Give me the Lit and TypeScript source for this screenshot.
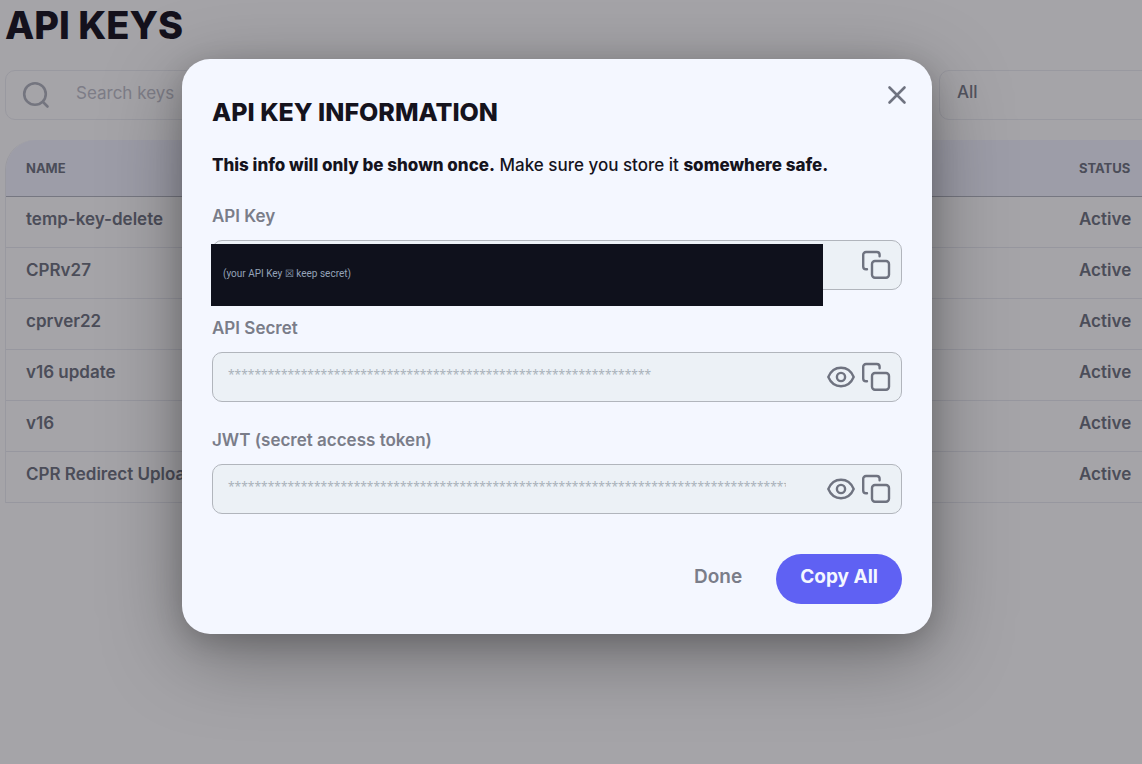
import { LitElement, html, css, svg } from "lit";
import { customElement, property, state } from "lit/decorators.js";

const copyIcon = svg`<svg class="icon" viewBox="0 0 30 30" width="30" height="30" aria-hidden="true">
  <rect x="11" y="11" width="17" height="16.8" rx="3"></rect>
  <path d="M6 19.2H5a2.8 2.8 0 0 1-2.8-2.8V4.8A2.8 2.8 0 0 1 5 2H15.8a2.8 2.8 0 0 1 2.8 2.8V6.2"></path>
</svg>`;

const eyeIcon = svg`<svg class="icon" viewBox="0 0 30 30" width="30" height="30" aria-hidden="true">
  <path d="M2.3 15C4.6 9.6 9.3 5.8 15 5.8S25.4 9.6 27.7 15C25.4 20.4 20.7 24.2 15 24.2S4.6 20.4 2.3 15Z"></path>
  <circle cx="15" cy="15" r="4.1"></circle>
</svg>`;

@customElement("secret-field")
export class SecretField extends LitElement {
  @property() label = "";
  @property() value = "";
  @property() cover = "";
  @property({ type: Boolean }) reveal = false;

  static styles = css`
    :host { display: block; }
    .label { display: block; font-size: 17px; line-height: 24px; font-weight: 600; color: #7a7d89; margin-bottom: 12px; }
    .wrap { position: relative; }
    .box {
      display: flex; align-items: center; gap: 5px; height: 50px; box-sizing: border-box;
      padding: 0 10px 0 15px; border: 1px solid #b1b5bc; border-radius: 10px; background: #ecf1f6;
    }
    .value {
      flex: 1; min-width: 0; margin-right: 35px; padding: 0 0 4px; border: 0; outline: 0; background: none;
      font: 400 12px/20px "Noto Sans", sans-serif; color: #a9b1ba;
    }
    .action { display: flex; padding: 0; border: 0; background: none; cursor: pointer; color: #6f7380; }
    .icon { fill: none; stroke: currentColor; stroke-width: 2.4; stroke-linecap: round; stroke-linejoin: round; }
    .cover {
      position: absolute; left: -1px; top: 4px; right: 79px; height: 62px; box-sizing: border-box;
      display: flex; align-items: center; padding: 0 12px 2px; background: #0f111c; color: #94a3b8;
      font: 400 10px/14px Roboto, sans-serif;
    }
  `;

  render() {
    return html`
      <label class="label" for="field">${this.label}</label>
      <div class="wrap">
        <div class="box">
          <input class="value" id="field" type="text" readonly .value=${this.value} />
          ${this.reveal ? html`<button class="action" type="button" aria-label="Show">${eyeIcon}</button>` : ""}
          <button class="action" type="button" aria-label="Copy">${copyIcon}</button>
        </div>
        ${this.cover ? html`<div class="cover">${this.cover}</div>` : ""}
      </div>
    `;
  }
}

@customElement("app-root")
export class AppRoot extends LitElement {
  @state() private keys = ["temp-key-delete", "CPRv27", "cprver22", "v16 update", "v16", "CPR Redirect Upload"];

  static styles = css`
    :host {
      display: block; position: relative; min-height: 100vh; overflow: hidden; background: #ffffff;
      font-family: Inter, sans-serif; color: #15131d;
    }
    .page { padding-left: 5px; margin-right: -20px; }
    .title { margin: 0 0 20px; font-size: 38px; line-height: 50px; font-weight: 800; }
    .filters { display: grid; grid-template-columns: 1fr 223px; gap: 20px; margin-bottom: 20px; }
    .search, .filter {
      height: 50px; box-sizing: border-box; border: 1px solid #ecedf2; border-radius: 10px;
      background: transparent; font: 400 17px/24px Inter, sans-serif;
    }
    .search { display: flex; align-items: center; gap: 26px; padding: 0 16px; }
    .search-icon { flex: none; fill: none; stroke: #b0b3bd; stroke-width: 2.6; stroke-linecap: round; }
    .query { flex: 1; min-width: 0; padding: 0 0 4px; border: 0; outline: 0; background: none; font: inherit; color: #6f7380; }
    .query::placeholder { color: #bfc1ca; opacity: 1; }
    .filter { appearance: none; padding: 0 17px 7px; color: #7a7d89; font-weight: 500; }
    .keys {
      width: 100%; border-collapse: separate; border-spacing: 0; text-align: left; color: #6f7380;
      border-left: 1px solid #ecedf2; border-radius: 30px 0 0 0;
    }
    .head { height: 57px; box-sizing: border-box; padding: 0 20px; background: #f2f4ff; border-bottom: 1px solid #b4b6c0; font-size: 13px; line-height: 18px; font-weight: 700; }
    .head:first-child { border-top-left-radius: 30px; }
    .cell { height: 51px; box-sizing: border-box; padding: 0 20px 6px; border-bottom: 1px solid #e9ebf0; font-size: 17px; line-height: 24px; font-weight: 600; }
    .status { width: 103px; box-sizing: border-box; }
    .overlay {
      position: absolute; inset: 0; display: flex; justify-content: center; align-items: flex-start;
      box-sizing: border-box; padding: 59px 28px 0 0; background: rgba(19, 17, 26, 0.38);
    }
    .modal {
      position: relative; box-sizing: border-box; width: 750px; max-width: 100%; padding: 37px 30px 30px;
      border-radius: 28px; background: #f4f7ff;
      box-shadow: 0 20px 80px rgba(0, 0, 0, 0.34), 0 8px 28px rgba(0, 0, 0, 0.16);
    }
    .close { position: absolute; top: 21px; right: 20px; display: flex; padding: 0; border: 0; background: none; cursor: pointer; }
    .close-icon { fill: none; stroke: #6f7380; stroke-width: 2.6; stroke-linecap: round; }
    .heading { margin: 0 0 23px; font-size: 25px; line-height: 32px; font-weight: 800; }
    .note { margin: 0 0 25px; font-size: 17px; line-height: 28px; font-weight: 500; }
    .strong { font-weight: 800; }
    .fields { display: grid; gap: 26px; }
    .actions { display: flex; justify-content: flex-end; gap: 10px; margin-top: 40px; }
    .done, .copy { height: 50px; border: 0; border-radius: 25px; padding: 0 24px 5px; font: 600 19px/26px Inter, sans-serif; cursor: pointer; }
    .done { background: none; color: #7a7d89; }
    .copy { background: #5f61f3; color: #f4f7ff; font-weight: 700; }
  `;

  render() {
    return html`
      <main class="page">
        <h1 class="title">API KEYS</h1>
        <div class="filters">
          <div class="search">
            <svg class="search-icon" viewBox="0 0 28 28" width="28" height="28" aria-hidden="true">
              <circle cx="13" cy="13" r="10.8"></circle><path d="m21 21 4.5 4.5"></path>
            </svg>
            <input class="query" type="search" aria-label="Search keys" placeholder="Search keys" />
          </div>
          <select class="filter" aria-label="Status filter"><option>All</option></select>
        </div>
        <table class="keys">
          <thead><tr><th class="head" scope="col">NAME</th><th class="head status" scope="col">STATUS</th></tr></thead>
          <tbody>
            ${this.keys.map((name) => html`<tr><td class="cell">${name}</td><td class="cell status">Active</td></tr>`)}
          </tbody>
        </table>
      </main>
      <div class="overlay">
        <section class="modal" role="dialog" aria-modal="true" aria-labelledby="heading">
          <button class="close" type="button" aria-label="Close">
            <svg class="close-icon" viewBox="0 0 30 30" width="30" height="30" aria-hidden="true"><path d="M7.5 7.5l15 15M22.5 7.5l-15 15"></path></svg>
          </button>
          <h2 class="heading" id="heading">API KEY INFORMATION</h2>
          <p class="note"><b class="strong">This info will only be shown once.</b> Make sure you store it <b class="strong">somewhere safe.</b></p>
          <div class="fields">
            <secret-field label="API Key" cover="(your API Key ☒ keep secret)"></secret-field>
            <secret-field label="API Secret" reveal .value=${"*".repeat(64)}></secret-field>
            <secret-field label="JWT (secret access token)" reveal .value=${"*".repeat(200)}></secret-field>
          </div>
          <div class="actions">
            <button class="done" type="button">Done</button>
            <button class="copy" type="button">Copy All</button>
          </div>
        </section>
      </div>
    `;
  }
}
